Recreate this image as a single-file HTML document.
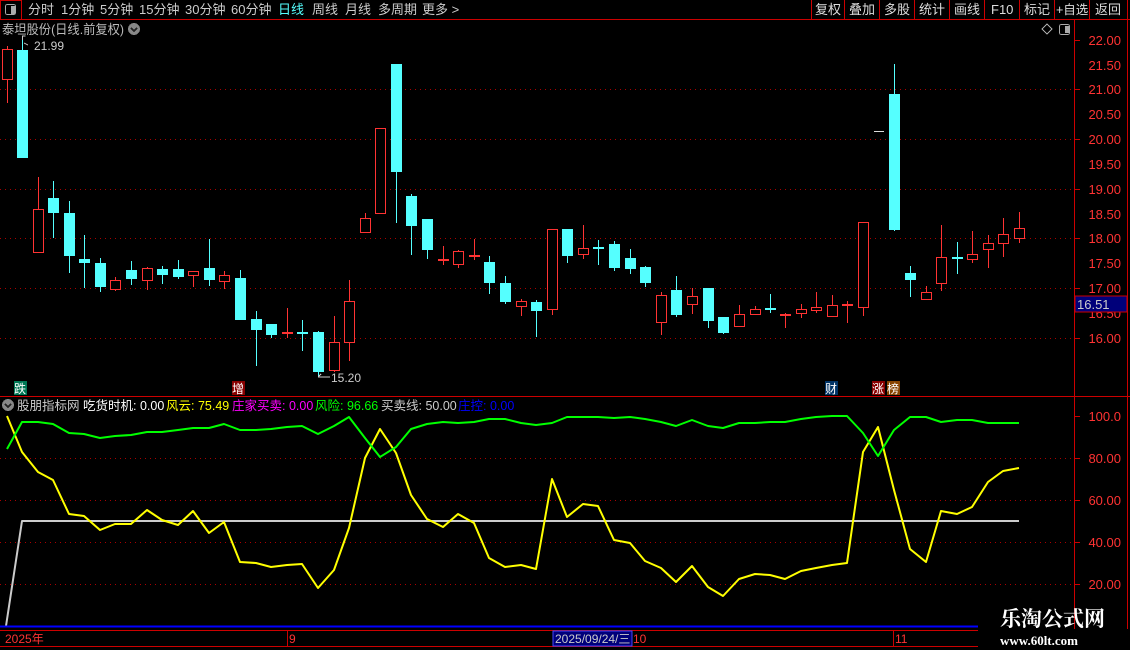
<!DOCTYPE html>
<html><head><meta charset="utf-8"><style>
html,body{margin:0;padding:0;background:#000;width:1130px;height:650px;overflow:hidden;font-family:"Liberation Sans","Noto Sans CJK SC",sans-serif}
svg text{font-family:"Liberation Sans","Noto Sans CJK SC",sans-serif}
</style></head><body>
<svg width="1130" height="650" viewBox="0 0 1130 650" xmlns="http://www.w3.org/2000/svg" shape-rendering="crispEdges">
<rect width="1130" height="650" fill="#000"/>
<!-- toolbar -->
<line x1="0" y1="19.5" x2="1130" y2="19.5" stroke="#c00" />
<rect x="0.5" y="0.5" width="21" height="19" fill="none" stroke="#c00"/>
<rect x="5.5" y="4.5" width="10" height="10" rx="2" fill="none" stroke="#aaa"/>
<rect x="11" y="6" width="4" height="8" fill="#aaa"/>
<g font-size="13" fill="#ccc">
<text x="28" y="14">分时</text><text x="61" y="14">1分钟</text><text x="100" y="14">5分钟</text><text x="139" y="14">15分钟</text><text x="185" y="14">30分钟</text><text x="231" y="14">60分钟</text>
<text x="278" y="14" fill="#5ff">日线</text><text x="312" y="14">周线</text><text x="345" y="14">月线</text><text x="378" y="14">多周期</text><text x="422" y="14">更多 &gt;</text>
</g>
<g stroke="#c00">
<line x1="811.5" y1="0" x2="811.5" y2="19"/><line x1="844.5" y1="0" x2="844.5" y2="19"/><line x1="879.5" y1="0" x2="879.5" y2="19"/><line x1="914.5" y1="0" x2="914.5" y2="19"/><line x1="949.5" y1="0" x2="949.5" y2="19"/><line x1="984.5" y1="0" x2="984.5" y2="19"/><line x1="1019.5" y1="0" x2="1019.5" y2="19"/><line x1="1054.5" y1="0" x2="1054.5" y2="19"/><line x1="1089.5" y1="0" x2="1089.5" y2="19"/><line x1="1127.5" y1="0" x2="1127.5" y2="19"/>
</g>
<g font-size="13" fill="#ddd">
<text x="815" y="14">复权</text><text x="849" y="14">叠加</text><text x="884" y="14">多股</text><text x="919" y="14">统计</text><text x="954" y="14">画线</text><text x="991" y="14">F10</text><text x="1024" y="14">标记</text><text x="1056" y="14" font-size="12.5">+自选</text><text x="1095" y="14">返回</text>
</g>
<!-- title -->
<text x="2" y="34" font-size="13" fill="#bbb" textLength="122" lengthAdjust="spacingAndGlyphs">泰坦股份(日线.前复权)</text>
<circle cx="134" cy="29" r="6" fill="#888"/><path d="M131 28l3 3 3-3" stroke="#222" stroke-width="1.5" fill="none"/>
<path d="M1047 24l5 5-5 5-5-5z" fill="none" stroke="#aaa"/>
<rect x="1059.5" y="24.5" width="10" height="10" rx="2" fill="none" stroke="#aaa"/><rect x="1065" y="26" width="4" height="7" fill="#aaa"/>
<!-- axes -->
<line x1="1074.5" y1="20" x2="1074.5" y2="629" stroke="#c00"/>
<line x1="1127.5" y1="20" x2="1127.5" y2="629" stroke="#c00"/>
<line x1="0" y1="396.5" x2="1130" y2="396.5" stroke="#c00"/>
<!-- grid -->
<g stroke="#a00" stroke-dasharray="1 4">
<line x1="0" y1="89.5" x2="1073" y2="89.5"/><line x1="0" y1="139.5" x2="1073" y2="139.5"/><line x1="0" y1="189.5" x2="1073" y2="189.5"/><line x1="0" y1="238.5" x2="1073" y2="238.5"/><line x1="0" y1="288.5" x2="1073" y2="288.5"/><line x1="0" y1="338.5" x2="1073" y2="338.5"/>
<line x1="0" y1="458.5" x2="1073" y2="458.5"/><line x1="0" y1="500.5" x2="1073" y2="500.5"/><line x1="0" y1="542.5" x2="1073" y2="542.5"/><line x1="0" y1="584.5" x2="1073" y2="584.5"/>
</g>
<g font-size="13" fill="#f33" text-anchor="end">
<text x="1121" y="45">22.00</text><text x="1121" y="70">21.50</text><text x="1121" y="94">21.00</text><text x="1121" y="119">20.50</text><text x="1121" y="144">20.00</text><text x="1121" y="169">19.50</text><text x="1121" y="194">19.00</text><text x="1121" y="219">18.50</text><text x="1121" y="243">18.00</text><text x="1121" y="268">17.50</text><text x="1121" y="293">17.00</text><text x="1121" y="318">16.50</text><text x="1121" y="343">16.00</text>
<text x="1121" y="421">100.0</text><text x="1121" y="463">80.00</text><text x="1121" y="505">60.00</text><text x="1121" y="547">40.00</text><text x="1121" y="589">20.00</text>
</g>
<g stroke="#c00">
<line x1="1075" y1="40.5" x2="1080" y2="40.5"/><line x1="1075" y1="89.5" x2="1080" y2="89.5"/><line x1="1075" y1="139.5" x2="1080" y2="139.5"/><line x1="1075" y1="189.5" x2="1080" y2="189.5"/><line x1="1075" y1="238.5" x2="1080" y2="238.5"/><line x1="1075" y1="288.5" x2="1080" y2="288.5"/><line x1="1075" y1="338.5" x2="1080" y2="338.5"/>
<line x1="1075" y1="416.5" x2="1080" y2="416.5"/><line x1="1075" y1="458.5" x2="1080" y2="458.5"/><line x1="1075" y1="500.5" x2="1080" y2="500.5"/><line x1="1075" y1="542.5" x2="1080" y2="542.5"/><line x1="1075" y1="584.5" x2="1080" y2="584.5"/>
</g>
<rect x="1075" y="296" width="52" height="16" fill="#00007a" stroke="#c00"/>
<text x="1077" y="309" font-size="13" fill="#ccc">16.51</text>
<!-- candles -->
<g id="c" stroke-width="1"></g>
<text x="34" y="50" font-size="12" fill="#ccc">21.99</text>
<path d="M22.5 40v-4h3M24 43l4 2" stroke="#ccc" fill="none"/>
<text x="331" y="382" font-size="12" fill="#ccc">15.20</text>
<path d="M318 377h12M318 377l3-3" stroke="#ccc" fill="none"/>
<line x1="874" y1="131.5" x2="884" y2="131.5" stroke="#ddd"/>
<!-- markers -->
<rect x="14" y="381" width="13" height="14" fill="#075"/><text x="14" y="393" font-size="12" fill="#fff">跌</text>
<rect x="232" y="381" width="13" height="14" fill="#800"/><text x="232" y="393" font-size="12" fill="#fff">增</text>
<rect x="825" y="381" width="13" height="14" fill="#036"/><text x="825" y="393" font-size="12" fill="#fff">财</text>
<rect x="872" y="381" width="13" height="14" fill="#800"/><text x="872" y="393" font-size="12" fill="#fff">涨</text>
<rect x="887" y="381" width="13" height="14" fill="#840"/><text x="887" y="393" font-size="12" fill="#fff">榜</text>
<!-- indicator header -->
<circle cx="8" cy="405" r="6" fill="#888"/><path d="M5 404l3 3 3-3" stroke="#222" stroke-width="1.5" fill="none"/>
<g font-size="12.5">
<text x="17" y="410" fill="#ccc">股朋指标网</text>
<text x="83" y="410" fill="#fff">吃货时机: 0.00</text>
<text x="166" y="410" fill="#ff0">风云: 75.49</text>
<text x="232" y="410" fill="#f0f">庄家买卖: 0.00</text>
<text x="315" y="410" fill="#0f0">风险: 96.66</text>
<text x="381" y="410" fill="#ccc">买卖线: 50.00</text>
<text x="458" y="410" fill="#00f">庄控: 0.00</text>
</g>
<g fill="none" stroke-width="2" shape-rendering="auto" stroke-linejoin="round">
<polyline stroke="#ccc" points="6,626 22,521 1019,521"/>
<polyline id="y" stroke="#ff0"/>
<polyline id="g" stroke="#0f0"/>
</g>
<line x1="0" y1="626.5" x2="978" y2="626.5" stroke="#00f" stroke-width="2"/>
<!-- bottom axis -->
<line x1="0" y1="630.5" x2="978" y2="630.5" stroke="#c00"/>
<line x1="0" y1="646.5" x2="978" y2="646.5" stroke="#c00"/>
<line x1="287.5" y1="630" x2="287.5" y2="646" stroke="#c00"/>
<line x1="893.5" y1="630" x2="893.5" y2="646" stroke="#c00"/>
<g font-size="12" fill="#f33"><text x="5" y="643">2025年</text><text x="289" y="643">9</text><text x="633" y="643">10</text><text x="895" y="643">11</text></g>
<rect x="553" y="631" width="79" height="15" fill="#00007a" stroke="#44f"/>
<text x="555" y="643" font-size="12" fill="#ccc">2025/09/24/三</text>
<text x="1000" y="626" font-size="21" font-weight="bold" fill="#fff" style="font-family:'Liberation Serif','Noto Serif CJK SC',serif">乐淘公式网</text>
<text x="1000" y="645" font-size="13" font-weight="bold" fill="#fff" style="font-family:'Liberation Serif',serif">www.60lt.com</text>
</svg>
<script>
var R="#ff3333",C="#55ffff";
var d=[[7,49,79,46,103,R],[22,50,158,40,158,C],[38,209,252,177,252,R],[53,198,213,181,238,C],[69,213,256,201,273,C],[84,259,263,235,288,C],[100,263,287,258,292,C],[115,280,289,277,291,R],[131,270,279,261,285,C],[147,268,280,267,290,R],[162,269,275,266,284,C],[178,269,277,260,279,C],[193,271,275,271,287,R],[209,268,280,239,286,C],[224,275,281,271,289,R],[240,278,320,270,320,C],[256,319,330,311,366,C],[271,324,335,324,338,C],[287,332,334,308,338,R],[302,332,333,320,351,C],[318,332,372,331,377,C],[334,342,370,316,372,R],[349,301,342,280,361,R],[365,218,232,213,233,R],[380,128,213,128,213,R],[396,64,172,64,223,C],[411,196,226,194,255,C],[427,219,250,219,259,C],[443,259,261,246,265,R],[458,251,264,250,268,R],[474,255,257,239,260,R],[489,262,283,256,294,C],[505,283,302,276,304,C],[521,301,306,299,316,R],[536,302,311,300,337,C],[552,229,309,229,315,R],[567,229,256,229,263,C],[583,248,254,225,259,R],[598,247,248,240,265,C],[614,244,268,241,271,C],[630,258,269,249,274,C],[645,267,283,266,287,C],[661,295,322,292,335,R],[676,290,315,276,317,C],[692,296,304,288,314,R],[708,288,321,288,328,C],[723,317,333,317,334,C],[739,314,326,305,326,R],[755,309,314,306,314,R],[770,308,309,294,313,C],[785,314,316,313,328,R],[801,309,313,304,318,R],[816,307,310,292,313,R],[832,305,316,295,317,R],[847,304,306,301,323,R],[863,222,307,222,316,R],[894,94,230,64,231,C],[910,273,280,266,297,C],[926,292,299,286,299,R],[941,257,283,225,291,R],[957,257,258,242,274,C],[972,254,259,231,263,R],[988,243,249,235,268,R],[1003,234,243,218,257,R],[1019,228,238,212,243,R]];
var s="";d.forEach(function(c){var x=c[0];s+='<line x1="'+(x+.5)+'" y1="'+c[3]+'" x2="'+(x+.5)+'" y2="'+c[4]+'" stroke="'+c[5]+'"/>';var h=Math.max(c[2]-c[1],1);
if(c[5]==R&&h>2)s+='<rect x="'+(x-5+.5)+'" y="'+(c[1]+.5)+'" width="10" height="'+h+'" fill="#000" stroke="'+R+'"/>';
else s+='<rect x="'+(x-5)+'" y="'+c[1]+'" width="11" height="'+Math.max(h,2)+'" fill="'+c[5]+'"/>';});
document.getElementById("c").innerHTML=s;
var xs=d.map(function(c){return c[0]});xs.splice(56,0,878);
var yy=[416,452,472,480,514,516,530,524,524,510,520,525,511,533,522,562,563,567,565,564,588,570,528,458,429,453,495,519,527,514,523,558,567,565,569,479,517,504,506,540,543,561,568,582,566,587,596,579,574,575,579,571,568,565,563,452,427,490,549,562,511,514,507,482,471,468];
var gg=[449,422,422,424,433,434,438,436,435,432,432,430,428,428,424,430,430,429,427,426,434,426,417,438,457,447,429,424,422,423,422,419,419,423,425,423,417,417,417,418,417,419,422,426,420,426,428,423,423,422,422,419,417,416,416,433,456,430,417,417,422,420,420,423,423,423];
function pts(a){return a.map(function(v,i){return xs[i]+","+v}).join(" ")}
document.getElementById("y").setAttribute("points",pts(yy));
document.getElementById("g").setAttribute("points",pts(gg));
</script>
</body></html>
